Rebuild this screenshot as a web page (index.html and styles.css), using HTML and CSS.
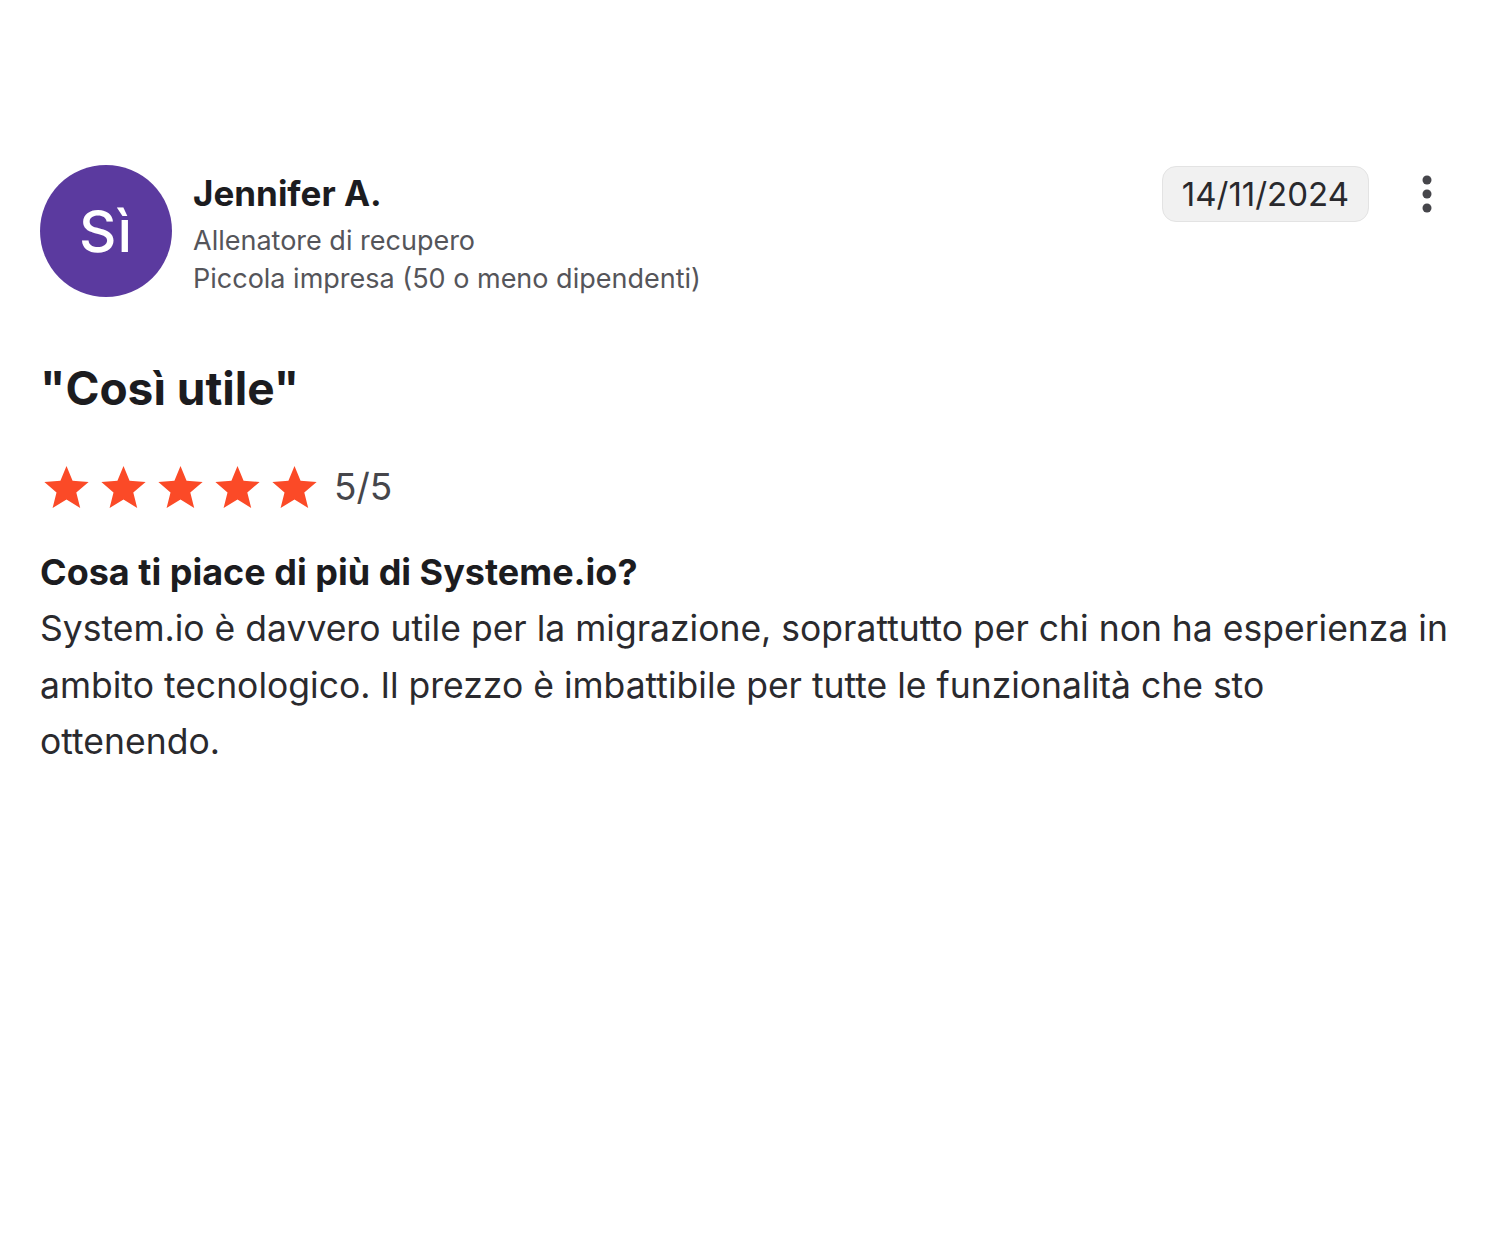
FILE: index.html
```html
<!DOCTYPE html>
<html lang="it">
<head>
<meta charset="utf-8">
<title>Recensione</title>
<link rel="stylesheet" href="styles.css">
</head>
<body>
<article class="review">
  <header class="review-head">
    <div class="avatar">Sì</div>
    <div class="author">
      <div class="name">Jennifer A.</div>
      <div class="metas">
        <div class="meta">Allenatore di recupero</div>
        <div class="meta">Piccola impresa (50 o meno dipendenti)</div>
      </div>
    </div>
    <div class="date">14/11/2024</div>
    <button class="more" aria-label="Altro">
      <svg width="12" height="40" viewBox="0 0 12 40"><circle cx="6" cy="6" r="4.5"/><circle cx="6" cy="20" r="4.5"/><circle cx="6" cy="34" r="4.5"/></svg>
    </button>
  </header>
  <h2 class="title">"Così utile"</h2>
  <div class="rating">
    <div class="stars">
      <svg class="star" viewBox="0 0 24 24"><path d="M12 1.5l3.1 7.6 8.2.6-6.3 5.3 2 8L12 18.7 4.9 23l2-8L.7 9.7l8.2-.6z"/></svg>
      <svg class="star" viewBox="0 0 24 24"><path d="M12 1.5l3.1 7.6 8.2.6-6.3 5.3 2 8L12 18.7 4.9 23l2-8L.7 9.7l8.2-.6z"/></svg>
      <svg class="star" viewBox="0 0 24 24"><path d="M12 1.5l3.1 7.6 8.2.6-6.3 5.3 2 8L12 18.7 4.9 23l2-8L.7 9.7l8.2-.6z"/></svg>
      <svg class="star" viewBox="0 0 24 24"><path d="M12 1.5l3.1 7.6 8.2.6-6.3 5.3 2 8L12 18.7 4.9 23l2-8L.7 9.7l8.2-.6z"/></svg>
      <svg class="star" viewBox="0 0 24 24"><path d="M12 1.5l3.1 7.6 8.2.6-6.3 5.3 2 8L12 18.7 4.9 23l2-8L.7 9.7l8.2-.6z"/></svg>
    </div>
    <span class="score">5/5</span>
  </div>
  <section class="answer">
    <h3 class="question">Cosa ti piace di più di Systeme.io?</h3>
    <p class="body">System.io è davvero utile per la migrazione, soprattutto per chi non ha esperienza in ambito tecnologico. Il prezzo è imbattibile per tutte le funzionalità che sto ottenendo.</p>
  </section>
</article>
</body>
</html>
```
FILE: styles.css
```css
* { box-sizing: border-box; }
html, body { margin: 0; background: #fff; }
body {
  font-family: Inter, "Noto Sans", sans-serif;
  color: #1f1f23;
}
.review {
  padding: 165px 40px 0 40px;
  width: 1500px;
}
.review-head {
  display: flex;
  align-items: flex-start;
}
.avatar {
  width: 132px;
  height: 132px;
  border-radius: 50%;
  background: #5b3a9f;
  color: #fff;
  font-size: 58px;
  font-weight: 500;
  display: flex;
  align-items: center;
  justify-content: center;
  flex: none;
  letter-spacing: 1px;
}
.author {
  margin-left: 21px;
  flex: 1;
  padding-top: 6px;
}
.name {
  font-size: 35px;
  font-weight: 700;
  line-height: 44px;
  color: #1c1c1f;
}
.metas { margin-top: 7px; }
.meta {
  font-size: 27px;
  line-height: 38px;
  color: #55555a;
}
.date {
  margin-top: 1px;
  background: #f1f1f1;
  border: 1px solid #e3e3e3;
  border-radius: 14px;
  padding: 0 19px;
  height: 56px;
  line-height: 54px;
  font-size: 33px;
  color: #29292d;
}
.more {
  border: 0;
  background: none;
  padding: 0;
  margin: 9px 27px 0 52px;
  width: 12px;
  height: 40px;
  fill: #46464b;
}
.title {
  margin: 60px 0 0 0;
  font-size: 46px;
  font-weight: 700;
  line-height: 60px;
  color: #1c1c1f;
}
.rating {
  display: flex;
  align-items: center;
  margin-top: 45px;
}
.stars {
  display: flex;
  gap: 10px;
  margin-left: 3px;
}
.star {
  width: 47px;
  height: 47px;
  fill: #fb4a27;
}
.score {
  margin-left: 16px;
  font-size: 37px;
  color: #46464b;
}
.answer { margin-top: 37px; }
.question {
  margin: 0;
  font-size: 36px;
  font-weight: 700;
  line-height: 50px;
  color: #1c1c1f;
}
.body {
  margin: 4px 0 0 0;
  width: 1409px;
  font-size: 35.5px;
  line-height: 56.5px;
  color: #2a2a2e;
}
```
